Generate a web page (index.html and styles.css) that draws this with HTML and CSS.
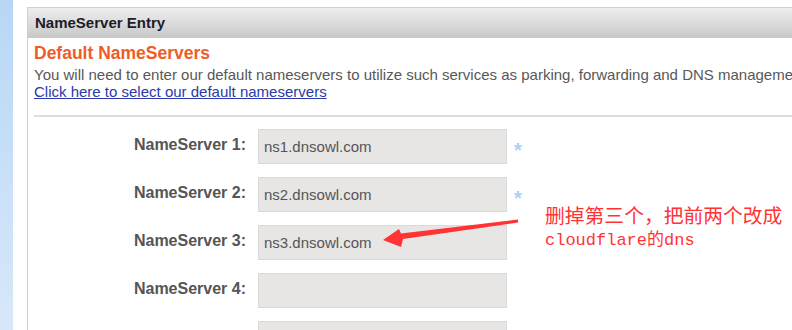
FILE: index.html
```html
<!DOCTYPE html>
<html lang="en">
<head>
  <meta charset="UTF-8">
  <title>NameServer Entry</title>
  <link rel="stylesheet" href="styles.css">
</head>
<body>
  <!-- Left sidebar strip -->
  <div class="side-strip"></div>

  <div class="main">
    <div class="panel">
      <div class="panel-header">NameServer Entry</div>

      <div class="panel-body">
        <h2 class="title">Default NameServers</h2>
        <p class="desc">You will need to enter our default nameservers to utilize such services as parking, forwarding and DNS management.</p>
        <a href="#" class="desc-link">Click here to select our default nameservers</a>

        <div class="divider"></div>

        <!-- NameServer form -->
        <div class="ns-form">
          <label class="ns-label">NameServer 1:</label>
          <input class="ns-input" type="text" value="ns1.dnsowl.com">
          <span class="required">*</span>

          <label class="ns-label">NameServer 2:</label>
          <input class="ns-input" type="text" value="ns2.dnsowl.com">
          <span class="required">*</span>

          <label class="ns-label">NameServer 3:</label>
          <input class="ns-input" type="text" value="ns3.dnsowl.com">
          <span></span>

          <label class="ns-label">NameServer 4:</label>
          <input class="ns-input" type="text" value="">
          <span></span>

          <label class="ns-label">NameServer 5:</label>
          <input class="ns-input" type="text" value="">
          <span></span>
        </div>
      </div>
    </div>
  </div>

  <!-- Annotation overlay -->
  <svg class="note-arrow" width="792" height="330" viewBox="0 0 792 330">
    <polygon points="518,219.5 401,233.5 399,229 383,240 401,247 403,239 518,222.5" fill="#ff3333"/>
  </svg>
  <div class="note">
    <div class="note-line1">删掉第三个，把前两个改成</div>
    <div class="note-line2">cloudflare的dns</div>
  </div>
</body>
</html>
```

FILE: styles.css
```css
/* Global */
html, body {
  height: 100%;
}

body {
  margin: 0;
  display: flex;
  overflow: hidden;
  background-color: #fff;
  font-family: "Liberation Sans", Arial, sans-serif;
  color: #555;
}

.side-strip {
  width: 13px;
  flex-shrink: 0;
  height: 100%;
  background: linear-gradient(#b8d7f5, #d7e8fa);
}

.main {
  padding: 7px 0 0 14px;
  flex-shrink: 0;
}

/* Panel */
.panel {
  width: 820px;
  border: 1px solid #cfcfcf;
  border-bottom: none;
  height: 400px;
}

.panel-header {
  height: 30px;
  line-height: 30px;
  padding-left: 7px;
  font-size: 15px;
  font-weight: bold;
  color: #1c1c28;
  background: linear-gradient(#eeeeee, #c8c8c8);
}

.panel-body {
  padding: 5px 6px 0 6px;
}

.title {
  margin: 0 0 4px;
  font-size: 17.5px;
  line-height: 20px;
  font-weight: bold;
  color: #ef5d27;
}

.desc {
  margin: 0;
  font-size: 15px;
  line-height: 16px;
  white-space: nowrap;
  color: #585858;
}

.desc-link {
  display: inline-block;
  font-size: 15px;
  line-height: 16px;
  color: #2b3aa8;
}

.divider {
  margin-top: 14px;
  height: 2px;
  background-color: #dedede;
}

/* Form */
.ns-form {
  display: grid;
  grid-template-columns: 212px 249px 20px;
  column-gap: 12px;
  row-gap: 13px;
  align-items: center;
  margin-top: 12px;
}

.ns-label {
  text-align: right;
  font-size: 16px;
  font-weight: bold;
  color: #555;
  padding-bottom: 4px;
}

.ns-input {
  box-sizing: border-box;
  width: 249px;
  height: 35px;
  margin: 0;
  padding: 0 5px;
  border: 1px solid #dcdad8;
  background-color: #e8e6e4;
  font-family: "Liberation Sans", Arial, sans-serif;
  font-size: 15px;
  color: #555;
  outline: none;
}

.required {
  margin-left: -5px;
  font-size: 20px;
  font-weight: bold;
  color: #a6d3f2;
  line-height: 1;
  padding-top: 6px;
}

/* Annotation */
.note-arrow {
  position: absolute;
  left: 0;
  top: 0;
  pointer-events: none;
}

.note {
  position: absolute;
  left: 545px;
  top: 202px;
  color: #ff3333;
}

.note-line1 {
  font-family: "Noto Sans CJK SC", sans-serif;
  font-size: 19.8px;
  line-height: 26px;
}

.note-line2 {
  font-family: "Liberation Mono", "Noto Sans CJK SC", monospace;
  font-size: 17px;
  line-height: 26px;
}
```
